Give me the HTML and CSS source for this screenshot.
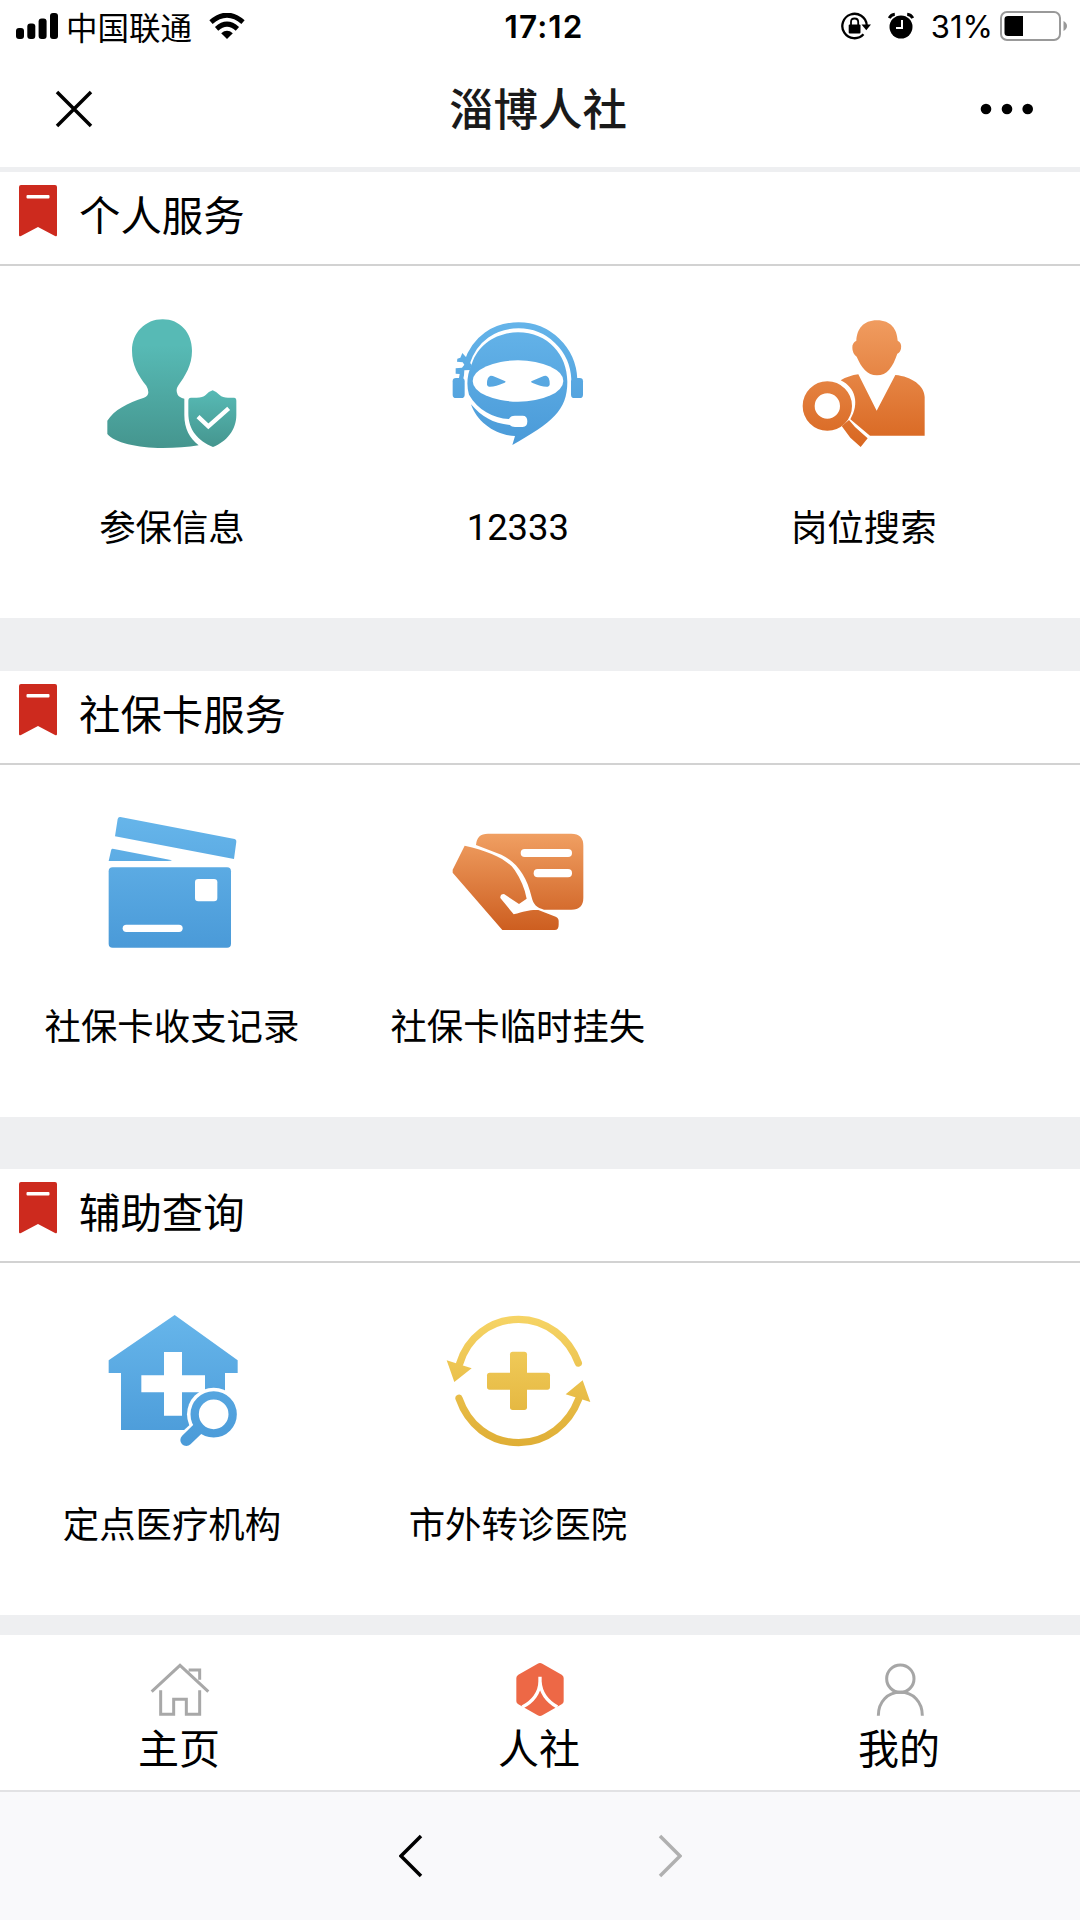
FILE: index.html
```html
<!DOCTYPE html>
<html lang="zh-CN">
<head>
    <meta charset="UTF-8">
    <meta name="viewport" content="width=device-width, initial-scale=1.0">
    <title>淄博人社</title>
    <link rel="stylesheet" href="styles.css">
</head>
<body>
    <!-- 渐变色和公用图标 -->
    <svg class="defs" width="0" height="0">
        <defs>
            <linearGradient id="teal" gradientUnits="userSpaceOnUse" x1="0" y1="60" x2="0" y2="440">
                <stop offset="0.2" stop-color="#57bab5"/><stop offset="1" stop-color="#45968f"/>
            </linearGradient>
            <linearGradient id="shield" gradientUnits="userSpaceOnUse" x1="0" y1="270" x2="0" y2="440">
                <stop offset="0" stop-color="#57bab5"/><stop offset="1" stop-color="#45968f"/>
            </linearGradient>
            <linearGradient id="blue" gradientUnits="userSpaceOnUse" x1="0" y1="50" x2="0" y2="440">
                <stop offset="0" stop-color="#66b5ea"/><stop offset="1" stop-color="#4a9ad8"/>
            </linearGradient>
            <linearGradient id="orange" gradientUnits="userSpaceOnUse" x1="0" y1="60" x2="0" y2="430">
                <stop offset="0" stop-color="#f09c60"/><stop offset="1" stop-color="#d96822"/>
            </linearGradient>
            <linearGradient id="card" gradientUnits="userSpaceOnUse" x1="0" y1="98" x2="0" y2="388">
                <stop offset="0" stop-color="#f09f62"/><stop offset="1" stop-color="#cd5e20"/>
            </linearGradient>
            <linearGradient id="yellow" gradientUnits="userSpaceOnUse" x1="0" y1="45" x2="0" y2="435">
                <stop offset="0" stop-color="#f6d465"/><stop offset="1" stop-color="#dfae35"/>
            </linearGradient>
            <symbol id="bookmark" viewBox="0 0 38 52">
                <path d="M2 0H36Q38 0 38 2V50Q38 52 36 51L19 42L2 51Q0 52 0 50V2Q0 0 2 0Z" fill="#cd2a1e"/>
                <rect x="7.500" y="10" width="23" height="3.500" rx="1" fill="#fff"/>
            </symbol>
        </defs>
    </svg>

    <div class="status-bar">
        <div class="status-left">
            <svg class="signal" viewBox="0 0 42 26">
                <rect x="0" y="15" width="8" height="11" rx="3"/>
                <rect x="11.300" y="10.500" width="8" height="15.500" rx="3"/>
                <rect x="22.600" y="5.500" width="8" height="20.500" rx="3"/>
                <rect x="34" y="0" width="8" height="26" rx="3"/>
            </svg>
            <span class="carrier">中国联通</span>
            <svg class="wifi" viewBox="0 0 36 26">
                <path d="M2 9.200Q18 -4.800 34 9.200" fill="none" stroke="#000" stroke-width="5"/>
                <path d="M7.600 15.800Q18 6.600 28.400 15.800" fill="none" stroke="#000" stroke-width="5"/>
                <path d="M12.200 20.200Q18 15.400 23.800 20.200L18 26Z"/>
            </svg>
        </div>
        <span class="time">17:12</span>
        <div class="status-right">
            <svg class="lock" viewBox="0 0 30 28">
                <path d="M25.700 13A12.200 12.200 0 1 0 22.500 22.300" fill="none" stroke="#000" stroke-width="2.300"/>
                <path d="M20.500 12.500H30L25.300 18.200Z"/>
                <rect x="7.700" y="12.500" width="11.800" height="9" rx="1"/>
                <path d="M10 13V10Q10 6.500 13.600 6.500T17.200 10V13" fill="none" stroke="#000" stroke-width="1.800"/>
            </svg>
            <svg class="alarm" viewBox="0 0 26 28">
                <circle cx="13" cy="15" r="11.500"/>
                <path d="M1.200 6.200Q3 2.500 6.800 2.200M24.800 6.200Q23 2.500 19.200 2.200" fill="none" stroke="#000" stroke-width="3"/>
                <path d="M14 8V16H8" fill="none" stroke="#fff" stroke-width="2"/>
            </svg>
            <span class="percent">31%</span>
            <svg class="battery" viewBox="0 0 68 30">
                <rect x="1" y="1" width="59" height="28" rx="6" fill="#fff" stroke="#999" stroke-width="2"/>
                <path d="M23 5H8Q4.500 5 4.500 8V22Q4.500 25 8 25H23Z"/>
                <path d="M63.500 10Q67 12 67 15T63.500 20Z" fill="#999"/>
            </svg>
        </div>
    </div>

    <div class="nav-bar">
        <svg class="close" viewBox="0 0 38 38"><path d="M2 2L36 36M36 2L2 36"/></svg>
        <h1>淄博人社</h1>
        <svg class="more" viewBox="0 0 54 12">
            <circle cx="6" cy="6" r="5.300"/><circle cx="27" cy="6" r="5.300"/><circle cx="47.700" cy="6" r="5.300"/>
        </svg>
    </div>

    <div class="content">
        <section class="panel">
            <div class="panel-title"><svg class="bookmark"><use href="#bookmark"/></svg><h2>个人服务</h2></div>
            <div class="grid">
                <a class="item">
                    <svg class="icon" viewBox="53 30 450 450">
                        <path fill="url(#teal)" d="M250 58C302 58 338 98 338 152C338 196 318 226 296 258Q288 270 295 284Q299 292 315 296V345C315 387 331 414 358 436C325 442 290 444 250 444C175 444 104 428 84 402V362C104 330 145 308 194 293Q207 289 207 277Q207 267 201 257C177 226 158 196 158 152C158 98 198 58 250 58Z"/>
                        <path fill="url(#shield)" d="M400 271Q413 276 421 285Q430 293 446 293H464Q471 293 471 302V345C471 390 442 425 401 441C356 423 327 390 327 340V302Q327 293 335 293H352Q370 293 379 285Q388 275 400 271Z"/>
                        <path fill="none" stroke="#fff" stroke-width="13" d="M356 350L387 379L448 325"/>
                    </svg>
                    <span>参保信息</span>
                </a>
                <a class="item">
                    <svg class="icon" viewBox="40 30 450 450">
                        <path fill="none" stroke="url(#blue)" stroke-width="18" d="M111 190C135 115 195 76 267 76C355 76 430 145 434 238"/>
                        <path fill="url(#blue)" d="M265 97C355 97 413 165 413 245C413 332 367 367 248 435L256 408C196 406 141 365 124 313C155 350 190 370 240 375Q246 381 256 381H279Q293 381 293 364T279 347H256Q242 347 238 357C190 354 145 330 118 284Q105 240 127 190C145 135 198 97 265 97Z"/>
                        <ellipse cx="265" cy="243" rx="136" ry="62" fill="#fff"/>
                        <path fill="url(#blue)" d="M172 254Q171 231 183 227Q190 226 227 244Q229 247 223 249Q197 261 178 260Q173 259 172 254ZM360 254Q361 231 349 227Q342 226 305 244Q303 247 309 249Q335 261 354 260Q359 259 360 254Z"/>
                        <rect x="69" y="234" width="36" height="60" rx="10" fill="url(#blue)"/>
                        <rect x="424" y="234" width="36" height="60" rx="10" fill="url(#blue)"/>
                        <path fill="url(#blue)" d="M98 159L108 170L120 176L122 190L126 195L121 210L104 211L103 226L100 240H87L90 222L78 221V205L97 203L104 194L99 187L82 185L83 176L92 173Z"/>
                    </svg>
                    <span class="number">12333</span>
                </a>
                <a class="item">
                    <svg class="icon" viewBox="27 30 450 450">
                        <path fill="url(#orange)" d="M291 61C333 61 351 88 353 122Q366 128 363 146Q360 158 352 161C338 202 321 226 291 226S244 202 230 170Q217 160 217 143Q216 129 229 122C231 88 249 61 291 61Z"/>
                        <path fill="url(#orange)" d="M235 223L290 332L346 225C395 229 434 258 434 291V407H270L211 358C239 312 227 262 182 241Q206 227 235 223Z"/>
                        <circle cx="142" cy="318" r="56" fill="none" stroke="url(#orange)" stroke-width="36"/>
                        <path fill="url(#orange)" d="M185 378L207 360L225 381L263 415L242 441L211 413Z"/>
                    </svg>
                    <span>岗位搜索</span>
                </a>
            </div>
        </section>

        <section class="panel">
            <div class="panel-title"><svg class="bookmark"><use href="#bookmark"/></svg><h2>社保卡服务</h2></div>
            <div class="grid">
                <a class="item">
                    <svg class="icon" viewBox="203 24 450 450">
                        <path fill="url(#blue)" d="M273 48L616 114Q622 116 621 122L614 174L257 106L265 54Q267 47 273 48ZM250 143Q340 160 428 178Q425 180 415 180H238L245 149Q246 142 250 143Z"/>
                        <rect x="238" y="199" width="367" height="241" rx="12" fill="url(#blue)"/>
                        <rect x="497" y="234" width="67" height="67" rx="10" fill="#fff"/>
                        <rect x="280" y="371" width="180" height="22" rx="11" fill="#fff"/>
                    </svg>
                    <span>社保卡收支记录</span>
                </a>
                <a class="item">
                    <svg class="icon" viewBox="190 24 450 450">
                        <path fill="url(#card)" d="M325 98H575Q611 98 611 134V290Q611 326 575 326H493C471 321 461 310 456 289C441 224 410 183 365 161L289 132Q291 98 325 98Z"/>
                        <path fill="url(#card)" d="M255 134C330 151 383 175 405 207Q433 249 441 293L418 309L373 279Q361 279 362 291L402 340C435 331 448 326 476 327L528 347Q537 351 537 360V371Q537 387 525 387H368L219 215V206Z"/>
                        <rect x="423" y="144" width="154" height="24" rx="12" fill="#fff"/>
                        <rect x="462" y="204" width="115" height="25" rx="12" fill="#fff"/>
                    </svg>
                    <span>社保卡临时挂失</span>
                </a>
            </div>
        </section>

        <section class="panel">
            <div class="panel-title"><svg class="bookmark"><use href="#bookmark"/></svg><h2>辅助查询</h2></div>
            <div class="grid">
                <a class="item">
                    <svg class="icon" viewBox="143 18 450 450">
                        <path fill="url(#blue)" d="M376 42L565 178V216H527V387H215V216H178V178Z"/>
                        <path fill="#fff" d="M344 153H398V223H467V274H398V344H344V274H276V223H344Z"/>
                        <circle cx="493" cy="340" r="80" fill="#fff"/>
                        <path fill="none" stroke="#fff" stroke-width="56" d="M447 386L405 424"/>
                        <path fill="none" stroke="url(#blue)" stroke-width="36" stroke-linecap="round" d="M447 382L411 417"/>
                        <circle cx="493" cy="340" r="57" fill="#fff" stroke="url(#blue)" stroke-width="25"/>
                    </svg>
                    <span>定点医疗机构</span>
                </a>
                <a class="item">
                    <svg class="icon" viewBox="130 18 450 450">
                        <path fill="none" stroke="url(#yellow)" stroke-width="22" stroke-linecap="round" d="M180 188C203 111 272 55 357 55C440 55 508 111 536 186M178 292C205 370 270 425 357 425C440 425 508 370 537 294"/>
                        <path fill="url(#yellow)" d="M141 178L216 202L164 243ZM549 238L572 303L498 280Z"/>
                        <rect x="262" y="215" width="189" height="51" rx="8" fill="url(#yellow)"/>
                        <rect x="331" y="152" width="51" height="175" rx="8" fill="url(#yellow)"/>
                    </svg>
                    <span>市外转诊医院</span>
                </a>
            </div>
        </section>
    </div>

    <div class="tab-bar">
        <a class="tab">
            <svg viewBox="150 180 180 180" fill="none" stroke="#a8a8a8" stroke-width="9">
                <path d="M155 275L240 196L325 275M266 210H299V239M182 271V343H221V298H259V343H299V271"/>
            </svg>
            <span>主页</span>
        </a>
        <a class="tab">
            <svg viewBox="1230 180 180 180">
                <path fill="#ed6846" d="M1313 191Q1320 187 1327 191L1385 224Q1391 228 1391 234V304Q1391 310 1385 313L1327 346Q1320 350 1313 346L1255 313Q1249 310 1249 304V234Q1249 228 1255 224Z"/>
                <path fill="none" stroke="#fff" stroke-width="10" d="M1320 230V244C1320 278 1298 306 1267 321M1320 244C1322 278 1342 304 1372 321"/>
            </svg>
            <span>人社</span>
        </a>
        <a class="tab">
            <svg viewBox="810 180 180 180" fill="none" stroke="#a6a6a6" stroke-width="9">
                <circle cx="901" cy="236" r="41"/>
                <path d="M835 347C835 305 863 277 901 277S967 305 967 347"/>
            </svg>
            <span>我的</span>
        </a>
    </div>

    <div class="tool-bar">
        <svg viewBox="0 0 24 44" stroke="#000"><path d="M22 2L2 22L22 42"/></svg>
        <svg viewBox="0 0 24 44" stroke="#b0b0b0"><path d="M2 2L22 22L2 42"/></svg>
    </div>
</body>
</html>
```
FILE: styles.css
```css
* {
    box-sizing: border-box;
}
body {
    margin: 0;
    width: 1080px;
    height: 1920px;
    display: flex;
    flex-direction: column;
    overflow: hidden;
    background-color: #fff;
    color: #000;
    font-family: 'Noto Sans CJK SC', sans-serif;
}
h1, h2 {
    margin: 0;
}
svg {
    display: block;
    flex: none;
}
.defs {
    position: absolute;
}

/* 状态栏 */
.status-bar {
    display: grid;
    grid-template-columns: 1fr auto 1fr;
    align-items: center;
    height: 52px;
    padding: 0 12px 0 16px;
}
.status-left, .status-right {
    display: flex;
    align-items: center;
}
.status-right {
    justify-content: flex-end;
}
.signal {
    width: 42px;
    height: 26px;
}
.carrier {
    margin-left: 8px;
    font-size: 31.500px;
    line-height: 50px;
}
.wifi {
    width: 36px;
    height: 26px;
    margin-left: 17px;
}
.time {
    padding: 2px 0 0 4px;
    font-family: Inter, sans-serif;
    font-size: 31.500px;
    font-weight: 600;
    line-height: 50px;
    letter-spacing: 1.100px;
}
.lock {
    width: 30px;
    height: 28px;
}
.alarm {
    width: 26px;
    height: 28px;
    margin-left: 17px;
}
.percent {
    padding-top: 2px;
    margin-left: 17px;
    font-family: Inter, sans-serif;
    font-size: 31px;
    line-height: 50px;
}
.battery {
    width: 68px;
    height: 30px;
    margin-left: 7px;
}

/* 标题栏 */
.nav-bar {
    display: flex;
    align-items: center;
    justify-content: space-between;
    height: 115px;
    padding: 0 46px 2px 55px;
}
.nav-bar h1 {
    padding-bottom: 4px;
    color: #1a1a1a;
    font-size: 44.500px;
    font-weight: 500;
    line-height: 60px;
}
.close {
    width: 38px;
    height: 38px;
    margin-right: 3px;
    fill: none;
    stroke: #000;
    stroke-width: 3.500;
}
.more {
    width: 54px;
    height: 12px;
}

/* 服务列表 */
.content {
    display: flex;
    flex-direction: column;
    gap: 52.500px;
    height: 1468px;
    padding-top: 5px;
    background-color: #eeeff1;
}
.panel {
    height: 446px;
    background-color: #fff;
}
.panel-title {
    display: flex;
    align-items: center;
    height: 94px;
    padding-left: 19px;
    border-bottom: 2px solid #d2d2d2;
}
.panel-title h2 {
    margin: 0 0 10px 22px;
    font-size: 41.400px;
    font-weight: 400;
    line-height: 60px;
}
.bookmark {
    width: 38px;
    height: 52px;
    margin-bottom: 14px;
}
.grid {
    display: grid;
    grid-template-columns: repeat(3, 32%);
    margin-left: -1px;
    padding-top: 44px;
}
.item {
    display: flex;
    flex-direction: column;
    align-items: center;
    gap: 40px;
    font-size: 36.400px;
    line-height: 50px;
}
.icon {
    width: 150px;
    height: 150px;
}
.number {
    padding-top: 3px;
    font-family: Roboto, sans-serif;
}

/* 底部菜单 */
.tab-bar {
    display: flex;
    height: 157px;
    padding-top: 25px;
    border-bottom: 2px solid #e2e2e4;
}
.tab {
    flex: 1;
    display: flex;
    flex-direction: column;
    align-items: center;
    font-size: 41px;
    line-height: 52px;
}
.tab span {
    padding-right: 2px;
}
.tab svg {
    width: 60px;
    height: 60px;
}
.tool-bar {
    flex: 1;
    display: flex;
    align-items: center;
    justify-content: center;
    gap: 235px;
    background-color: #f9f9fb;
}
.tool-bar svg {
    width: 24px;
    height: 44px;
    fill: none;
    stroke-width: 3.500;
}
```
